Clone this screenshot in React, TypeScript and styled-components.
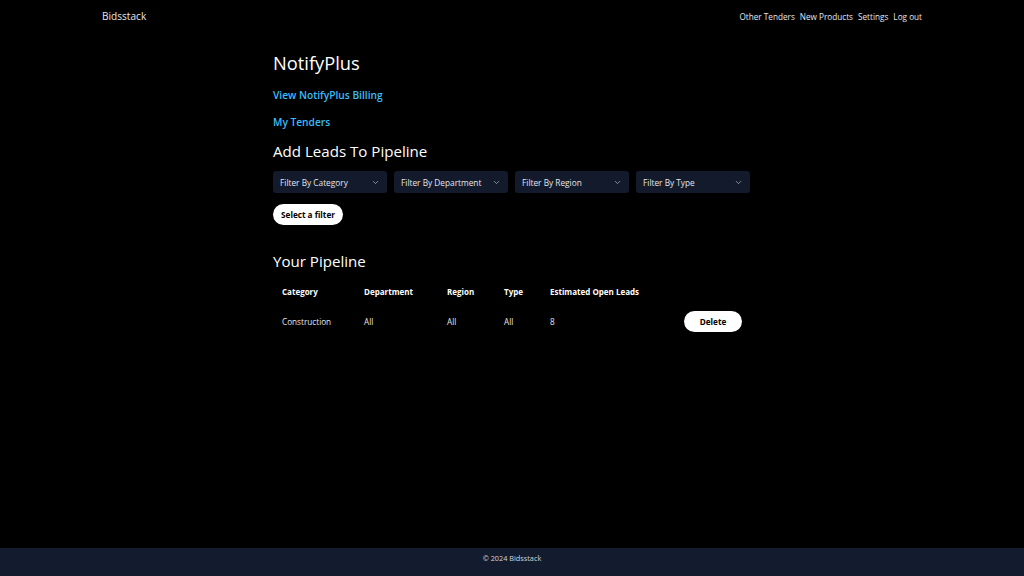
import React from "react";
import styled, { createGlobalStyle } from "styled-components";

const Global = createGlobalStyle`
  html, body { margin: 0; padding: 0; background: #000; }
  body { font-family: "Open Sans", "Noto Sans", sans-serif; color: #fff; }
  #root { min-height: 576px; display: flex; flex-direction: column; }
`;

const Page = styled.div`
  min-height: 576px;
  display: flex;
  flex-direction: column;
  background: #000;
`;

const Nav = styled.nav`
  height: 32px;
  display: flex;
  align-items: center;
  justify-content: space-between;
  padding: 0 102px;
`;

const Brand = styled.div`
  font-size: 10.1px;
  color: #e5e7eb;
`;

const NavLinks = styled.div`
  display: flex;
  gap: 5px;
  font-size: 8.2px;
  color: #e5e7eb;
`;

const Main = styled.main`
  flex: 1;
  width: 478px;
  margin: 0 auto;
`;

const Title = styled.h1`
  margin: 18px 0 0;
  font-weight: 400;
  font-size: 18.3px;
  line-height: 26px;
`;

const BlueLink = styled.a<{ $mt: number }>`
  display: block;
  margin-top: ${(p) => p.$mt}px;
  font-size: 10.2px;
  font-weight: 600;
  color: #38bdf8;
  text-decoration: none;
  line-height: 14px;
`;

const H2 = styled.h2<{ $mt: number }>`
  margin: ${(p) => p.$mt}px 0 0;
  font-weight: 400;
  font-size: 15.1px;
  line-height: 20px;
`;

const Filters = styled.div`
  display: flex;
  gap: 7px;
  margin-top: 10px;
`;

const Select = styled.div`
  width: 114px;
  height: 22px;
  box-sizing: border-box;
  background: #121a2b;
  border-radius: 3px;
  display: flex;
  align-items: center;
  justify-content: space-between;
  padding: 0 7px 0 7px;
  font-size: 8.3px;
  color: #e5e7eb;
`;

const Pill = styled.button<{ $w: number }>`
  width: ${(p) => p.$w}px;
  height: 21px;
  border: none;
  border-radius: 11px;
  background: #fff;
  color: #000;
  font-family: inherit;
  font-size: 8.2px;
  font-weight: 700;
  padding: 0;
`;

const SelectBtnRow = styled.div`
  margin-top: 8px;
`;

const Table = styled.table`
  margin-top: 9px;
  border-collapse: collapse;
  width: 478px;
  font-size: 8px;
  th, td { text-align: left; padding: 0; }
  th { font-weight: 700; height: 22px; }
  td { height: 38px; color: #e5e7eb; font-size: 8.2px; }
`;

const Col = styled.col<{ $w: number }>`
  width: ${(p) => p.$w}px;
`;

const Footer = styled.footer`
  height: 28px;
  box-sizing: border-box;
  padding-top: 5px;
  background: #131b2e;
  display: flex;
  align-items: flex-start;
  justify-content: center;
  font-size: 7.3px;
  line-height: 10px;
  color: #d1d5db;
`;

const Chevron = () => (
  <svg width="9" height="9" viewBox="0 0 24 24" fill="none" stroke="#9ca3af" strokeWidth="2.2" strokeLinecap="round" strokeLinejoin="round">
    <path d="m6 9 6 6 6-6" />
  </svg>
);

const filters = ["Filter By Category", "Filter By Department", "Filter By Region", "Filter By Type"];

export default function App() {
  return (
    <Page>
      <Global />
      <Nav>
        <Brand>Bidsstack</Brand>
        <NavLinks>
          <span>Other Tenders</span>
          <span>New Products</span>
          <span>Settings</span>
          <span>Log out</span>
        </NavLinks>
      </Nav>
      <Main>
        <Title>NotifyPlus</Title>
        <BlueLink $mt={12} href="#">View NotifyPlus Billing</BlueLink>
        <BlueLink $mt={13} href="#">My Tenders</BlueLink>
        <H2 $mt={12}>Add Leads To Pipeline</H2>
        <Filters>
          {filters.map((f) => (
            <Select key={f}>
              <span>{f}</span>
              <Chevron />
            </Select>
          ))}
        </Filters>
        <SelectBtnRow>
          <Pill $w={70}>Select a filter</Pill>
        </SelectBtnRow>
        <H2 $mt={26}>Your Pipeline</H2>
        <Table>
          <colgroup>
            <Col $w={91} />
            <Col $w={83} />
            <Col $w={57} />
            <Col $w={46} />
            <Col $w={134} />
            <Col $w={67} />
          </colgroup>
          <thead>
            <tr>
              <th style={{ paddingLeft: 9 }}>Category</th>
              <th>Department</th>
              <th>Region</th>
              <th>Type</th>
              <th>Estimated Open Leads</th>
              <th></th>
            </tr>
          </thead>
          <tbody>
            <tr>
              <td style={{ paddingLeft: 9 }}>Construction</td>
              <td>All</td>
              <td>All</td>
              <td>All</td>
              <td>8</td>
              <td><Pill $w={58}>Delete</Pill></td>
            </tr>
          </tbody>
        </Table>
      </Main>
      <Footer>© 2024 Bidsstack</Footer>
    </Page>
  );
}
